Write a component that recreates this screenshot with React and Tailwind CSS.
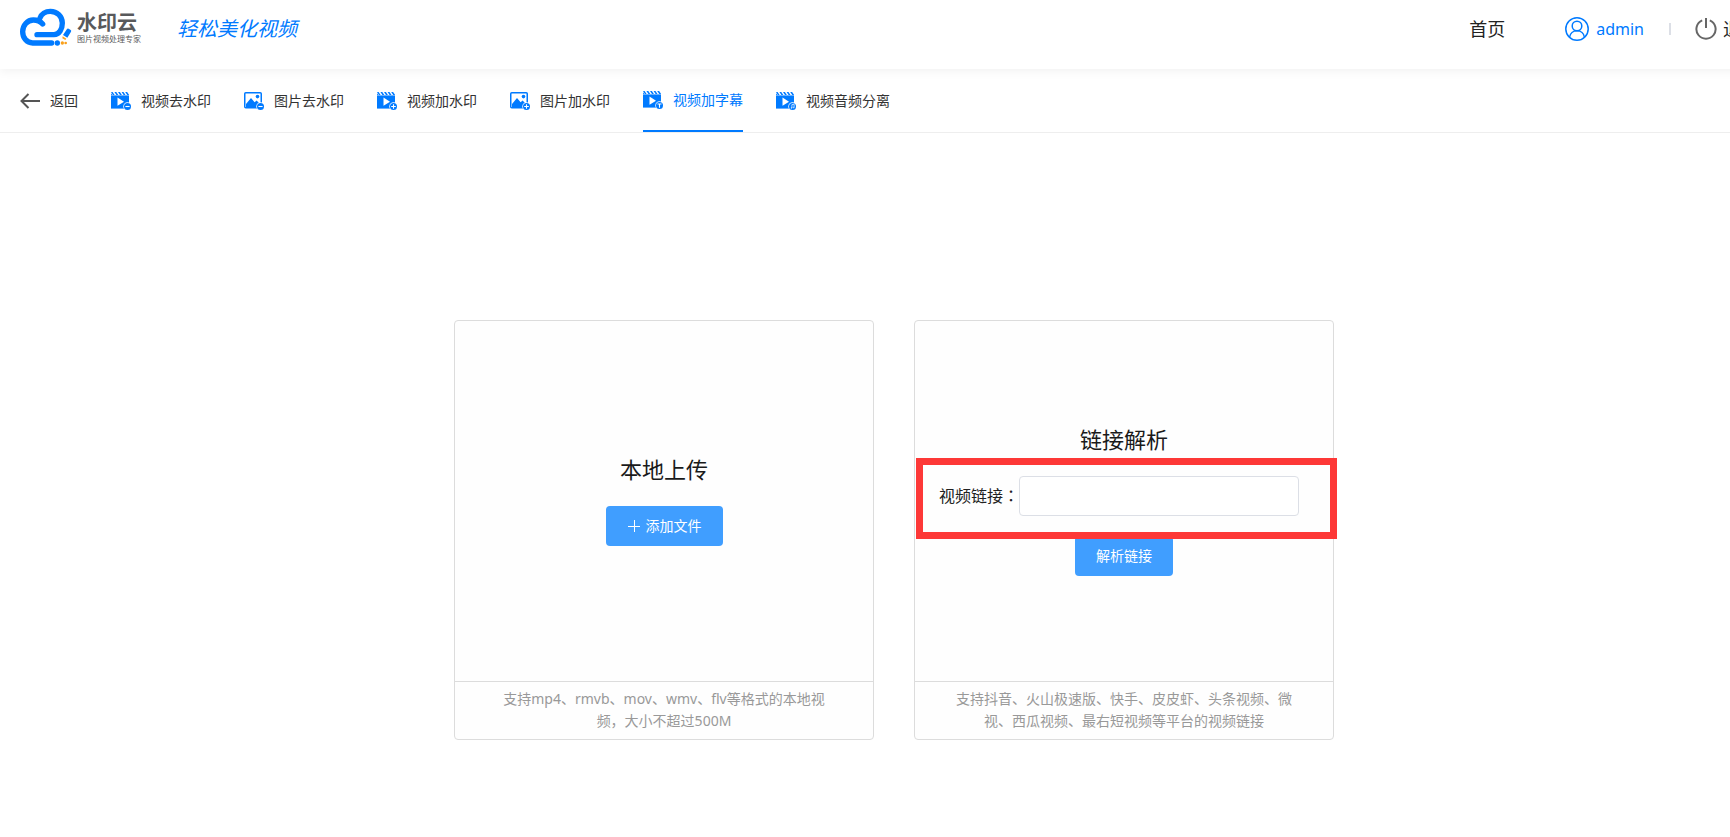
import { useState } from 'react'
import clsx from 'clsx'

const tabs = [
  { name: '视频去水印', type: 'video', badge: 'minus' },
  { name: '图片去水印', type: 'image', badge: 'minus' },
  { name: '视频加水印', type: 'video', badge: 'plus' },
  { name: '图片加水印', type: 'image', badge: 'plus' },
  { name: '视频加字幕', type: 'video', badge: 'text' },
  { name: '视频音频分离', type: 'video', badge: 'audio' },
]

const badges = {
  minus: <path d="M14.4 14.5h4.2" />,
  plus: <path d="M14.2 14.5h4.6M16.5 12.2v4.6" />,
  text: <path d="M14.5 13h4M16.5 13v3.8" />,
  audio: (
    <>
      <path d="M15.9 16v-3.3l2.2-.5v3.3" strokeWidth="0.7" />
      <circle cx="15.4" cy="16" r="0.4" strokeWidth="0.6" />
      <circle cx="17.6" cy="15.5" r="0.4" strokeWidth="0.6" />
    </>
  ),
}

const TabIcon = ({ type, badge }) => (
  <svg viewBox="0 0 20 18" className="h-[18px] w-5 shrink-0" fill="none" aria-hidden="true">
    {type === 'video' ? (
      <>
        <path
          d="M0 0h1.6l2 3H1.8zM3.4 0h1.9l2 3H5.4zM7 0h1.9l2 3H9zM10.6 0h1.9l2 3h-1.9zM14.2 0h1.9l1.9 2.8V3h-1.8zM0 1.2L1.2 3H0z"
          fill="#007aff"
        />
        <path d="M0 3.4h18V16.6H0z" fill="#007aff" />
        <path d="M6.5 5.600l6.500 4.100-6.500 4.100z" fill="#fff" />
      </>
    ) : (
      <>
        <rect x="0.75" y="0.75" width="16.5" height="15" rx="1" stroke="#007aff" strokeWidth="1.5" />
        <path d="M2 15v-3l5-6 3.6 4.2 2-1.6L16 12v3z" fill="#007aff" />
        <circle cx="13.5" cy="4.6" r="1.8" fill="#007aff" />
      </>
    )}
    <circle cx="16.5" cy="14.5" r="4.2" fill="#fff" />
    <circle cx="16.5" cy="14.5" r="3.5" fill="#007aff" />
    <g stroke="#fff" strokeWidth="1.1">
      {badges[badge]}
    </g>
  </svg>
)

const Logo = () => (
  <a href="#" className="flex items-center gap-[5px]">
    <svg viewBox="60 22 156 114" className="h-[38px] w-[52px]" fill="none" aria-hidden="true">
      <g stroke="#007aff" strokeWidth="16" strokeLinecap="round" strokeLinejoin="round">
        <path d="M155 127H98C80 127 68 111 68 93C68 74 82 58 100 58C112 58 122 63 128 70" />
        <path d="M120 52C124 40 136 32 151 32C171 32 187 47 187 67C187 85 178 102 162 102H111" />
      </g>
      <circle cx="172" cy="127" r="8" fill="#007aff" />
      <path d="M189 103L201 85Q203 82 206 84L212 88Q215 90 213 93L202 111Z" fill="#007aff" />
      <path d="M188 107L199 114L196 118L187 113Z" fill="#f9a01b" />
      <circle cx="187" cy="127" r="5" fill="#f9a01b" />
      <circle cx="197" cy="127" r="4" fill="#f9a01b" />
    </svg>
    <span className="flex flex-col pt-1 text-[#58595b]">
      <span className="text-xl leading-5 font-bold">水印云</span>
      <span className="text-[8px] leading-3">图片视频处理专家</span>
    </span>
  </a>
)

const Header = () => (
  <header className="relative flex h-[69px] items-start justify-between bg-white pr-[29px] pl-5 shadow-[0_2px_10px_rgba(0,0,0,0.06)]">
    <div className="flex h-[54px] items-center gap-9">
      <Logo />
      <span className="pt-1 text-xl text-[#007aff] italic">轻松美化视频</span>
    </div>

    <div className="flex h-[58px] items-center text-lg text-[#222]">
      <a href="#" className="mr-15">
        首页
      </a>
      <a href="#" className="flex items-center gap-[7px] text-base text-[#007aff]">
        <svg viewBox="0 0 24 24" className="size-6" fill="none" stroke="#007aff" strokeWidth="1.5">
          <circle cx="12" cy="12" r="11.2" />
          <circle cx="12" cy="9" r="4.8" />
          <path d="M4.6 20.2c.5-3.8 3.5-6.4 7.4-6.4s6.9 2.6 7.4 6.4" />
        </svg>
        admin
      </a>
      <span className="mr-6 ml-[25px] h-3 w-0.5 bg-[#dcdfe6]" />
      <button type="button" className="flex items-center gap-[6px]">
        <svg viewBox="0 0 22 22" className="size-[22px]" fill="none" stroke="#666" strokeWidth="2">
          <path d="M7.2 2.3a9.6 9.6 0 1 0 7.6 0M11 0v10" />
        </svg>
        退出
      </button>
    </div>
  </header>
)

const Card = ({ title, tip, children }) => (
  <section className="flex h-[420px] w-[420px] flex-col rounded border border-[#dcdcdc] bg-[#fefefe]">
    <div className="flex flex-1 flex-col items-center justify-center gap-5">
      <h2 className="pb-1 text-[22px] leading-[26px] text-[#1a1a1a]">{title}</h2>
      {children}
    </div>
    <p className="border-t border-[#dcdcdc] px-10 pt-[6px] pb-[7px] text-center text-sm leading-[22px] text-[#999]">
      {tip}
    </p>
  </section>
)

export default function App() {
  const [active, setActive] = useState('视频加字幕')
  const [link, setLink] = useState('')

  return (
    <div className="min-h-screen overflow-hidden bg-white font-['Noto_Sans','Noto_Sans_CJK_SC',sans-serif]">
      <div className="min-w-[1788px]">
        <Header />

        <nav className="flex h-16 gap-[33px] border-b border-[#eee] pl-5 text-sm text-[#333]">
          <button type="button" className="flex items-center gap-[10px]">
            <svg viewBox="0 0 20 16" className="h-4 w-5" fill="none" stroke="#555" strokeWidth="2">
              <path d="M20 8H1.5M8.5 1L1.5 8l7 7" />
            </svg>
            返回
          </button>
          {tabs.map((tab) => (
            <button
              key={tab.name}
              type="button"
              onClick={() => setActive(tab.name)}
              className={clsx(
                'flex items-center gap-[10px]',
                active === tab.name && 'border-b-2 border-[#007aff] text-[#007aff]'
              )}
            >
              <TabIcon type={tab.type} badge={tab.badge} />
              {tab.name}
            </button>
          ))}
        </nav>

        <main className="flex justify-center gap-10 pt-[187px]">
          <Card title="本地上传" tip="支持mp4、rmvb、mov、wmv、flv等格式的本地视频，大小不超过500M">
            <button
              type="button"
              className="flex h-10 items-center gap-[5px] rounded bg-[#409eff] px-[21px] text-sm text-white"
            >
              <svg viewBox="0 0 14 14" className="size-[14px]" stroke="currentColor">
                <path d="M1 7.5h12M7.5 1v12" />
              </svg>
              添加文件
            </button>
          </Card>

          <Card
            title="链接解析"
            tip="支持抖音、火山极速版、快手、皮皮虾、头条视频、微视、西瓜视频、最右短视频等平台的视频链接"
          >
            <div className="relative flex items-center pr-[10px]">
              {/* TC face keeps the full-width colon centred */}
              <label
                htmlFor="video-link"
                className="pb-0.5 font-['Noto_Sans_CJK_TC','Noto_Sans_CJK_SC',sans-serif] text-base text-[#222]"
              >
                视频链接：
              </label>
              <input
                id="video-link"
                type="text"
                value={link}
                onChange={(e) => setLink(e.target.value)}
                className="h-10 w-70 rounded border border-[#dcdfe6] bg-white px-4 text-sm outline-none"
              />
              {/* highlight frame */}
              <div className="pointer-events-none absolute -top-[18px] -right-7 -bottom-[23px] -left-[23px] z-10 border-[7px] border-[#fd3837]" />
            </div>
            <button
              type="button"
              className="h-10 rounded bg-[#409eff] px-[21px] text-sm text-white"
            >
              解析链接
            </button>
          </Card>
        </main>
      </div>
    </div>
  )
}
